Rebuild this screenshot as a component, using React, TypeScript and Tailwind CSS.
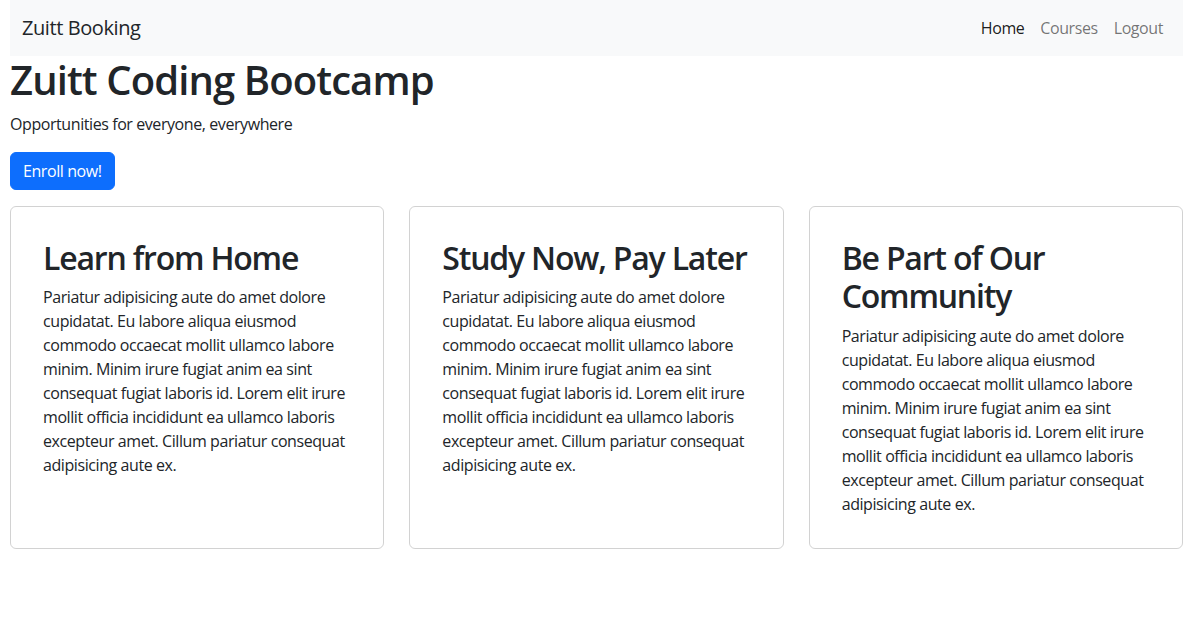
import React from 'react';

const lorem =
  'Pariatur adipisicing aute do amet dolore cupidatat. Eu labore aliqua eiusmod commodo occaecat mollit ullamco labore minim. Minim irure fugiat anim ea sint consequat fugiat laboris id. Lorem elit irure mollit officia incididunt ea ullamco laboris excepteur amet. Cillum pariatur consequat adipisicing aute ex.';

const highlights = ['Learn from Home', 'Study Now, Pay Later', 'Be Part of Our Community'];

const App = () => {
  return (
    <div className="min-h-screen bg-white px-[10px] text-[#212529] tracking-[-0.42px] font-['Segoe_UI','Open_Sans',sans-serif]">
      <nav className="flex items-center justify-between bg-[#f8f9fa] py-2 px-3">
        <a href="#" className="py-[5px] text-xl leading-[30px]">
          Zuitt Booking
        </a>
        <div className="flex">
          <a href="#" className="px-2 py-2 leading-6 text-black/90">Home</a>
          <a href="#" className="px-2 py-2 leading-6 text-black/55">Courses</a>
          <a href="#" className="px-2 py-2 leading-6 text-black/55">Logout</a>
        </div>
      </nav>

      <h1 className="text-[40px] font-semibold leading-[48px] tracking-[-0.9px] mb-2">Zuitt Coding Bootcamp</h1>
      <p className="leading-6 mb-4">Opportunities for everyone, everywhere</p>
      <button className="bg-[#0d6efd] text-white rounded-md px-3 py-[6px] leading-6 border border-[#0d6efd]">
        Enroll now!
      </button>

      <div className="grid grid-cols-3 gap-[25px] mt-4">
        {highlights.map((title) => (
          <div key={title} className="border border-black/[0.175] rounded-md p-8">
            <h2 className="text-[32px] font-semibold leading-[1.2] tracking-[-1.2px] mb-2">{title}</h2>
            <p className="leading-6">{lorem}</p>
          </div>
        ))}
      </div>
    </div>
  );
};

export default App;
